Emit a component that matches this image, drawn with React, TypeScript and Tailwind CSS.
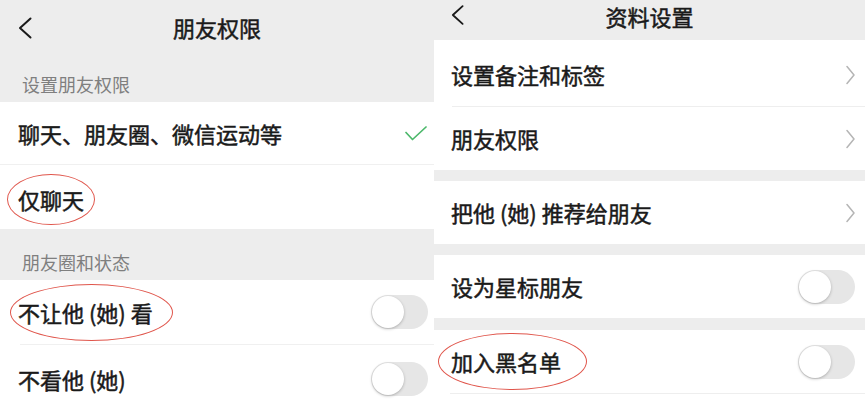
const font = { fontFamily: '"Noto Sans CJK SC", "Noto Sans", sans-serif' };

function BackIcon({ className }: { className?: string }) {
  return (
    <svg viewBox="0 0 14 22" className={className} fill="none" stroke="#1a1a1a" strokeWidth="2" strokeLinecap="round" strokeLinejoin="round">
      <path d="M12.5 1.5 2 11l10.5 9.5" />
    </svg>
  );
}

function Arrow() {
  return (
    <svg viewBox="0 0 9 20" className="w-[9px] h-[20px]" fill="none" stroke="#b5b5b5" strokeWidth="1.5" strokeLinecap="round" strokeLinejoin="round">
      <path d="M1 1.5 8 10l-7 8.5" />
    </svg>
  );
}

function Check() {
  return (
    <svg viewBox="0 0 22 15" className="w-[22px] h-[15px]" fill="none" stroke="#4cb86b" strokeWidth="1.7" strokeLinecap="round" strokeLinejoin="round">
      <path d="M1 6.5 7.5 13.5 21 1" />
    </svg>
  );
}

function Toggle() {
  return (
    <div className="w-[57px] h-[34px] rounded-full bg-[#e6e6e6] p-[1px] flex items-center">
      <div className="w-[32px] h-[32px] rounded-full bg-white shadow-[0_1px_3px_rgba(0,0,0,0.25)]" />
    </div>
  );
}

function Ring({ className }: { className: string }) {
  return <div className={"absolute rounded-[50%] border-[1.5px] border-[#e0564c] pointer-events-none " + className} />;
}

const rowText = "text-[22px] text-[#1a1a1a] [-webkit-text-stroke:0.5px_#1a1a1a]";

function LeftPanel() {
  return (
    <div className="w-[434px] h-full bg-[#ededed] flex flex-col">
      <div className="relative h-[55px] flex items-center justify-center">
        <BackIcon className="absolute left-[18px] top-[17px] w-[14px] h-[22px]" />
        <span className={rowText}>朋友权限</span>
      </div>
      <div className="h-[47px] flex items-end pl-[22px] pb-[4px] text-[18px] text-[#7f7f7f]">设置朋友权限</div>
      <div className="bg-white">
        <div className="h-[63px] flex items-center justify-between pl-[18px] pr-[7px] border-b border-[#f0f0f0]">
          <span className={rowText}>聊天、朋友圈、微信运动等</span>
          <Check />
        </div>
        <div className="h-[64px] flex items-center pl-[18px] pt-[4px]">
          <span className={"relative " + rowText}>
            仅聊天
            <Ring className="-left-[11px] -right-[11px] -top-[9px] -bottom-[9px]" />
          </span>
        </div>
      </div>
      <div className="h-[51px] flex items-end pl-[22px] pb-[4px] text-[18px] text-[#7f7f7f]">朋友圈和状态</div>
      <div className="bg-white flex-1">
        <div className="h-[64px] flex items-center justify-between pl-[18px] pr-[6px]">
          <span className={"relative " + rowText}>
            不让他 (她) 看
            <Ring className="-left-[8px] -right-[20px] -top-[12px] -bottom-[12px]" />
          </span>
          <Toggle />
        </div>
        <div className="ml-[20px] border-t border-[#f0f0f0]" />
        <div className="h-[64px] flex items-center justify-between pl-[18px] pr-[6px] pt-[4px]">
          <span className={rowText}>不看他 (她)</span>
          <Toggle />
        </div>
      </div>
    </div>
  );
}

function Row({ label, right, ring }: { label: string; right: React.ReactNode; ring?: boolean }) {
  return (
    <div className="h-[63px] flex items-center justify-between pl-[17px] pr-[10px]">
      <span className={"relative " + rowText}>
        {label}
        {ring && <Ring className="-left-[13px] -right-[26px] -top-[12px] -bottom-[12px]" />}
      </span>
      {right}
    </div>
  );
}

function RightPanel() {
  return (
    <div className="flex-1 h-full bg-[#ededed] flex flex-col">
      <div className="relative h-[40px] flex items-center justify-center pb-[8px]">
        <BackIcon className="absolute left-[17px] top-[4px] w-[13px] h-[22px]" />
        <span className={rowText}>资料设置</span>
      </div>
      <div className="bg-white">
        <div className="pt-[3px]">
          <Row label="设置备注和标签" right={<Arrow />} />
        </div>
        <div className="ml-[18px] border-t border-[#eeeeee]" />
        <Row label="朋友权限" right={<Arrow />} />
      </div>
      <div className="h-[11px]" />
      <div className="bg-white">
        <Row label="把他 (她) 推荐给朋友" right={<Arrow />} />
      </div>
      <div className="h-[11px]" />
      <div className="bg-white">
        <Row label="设为星标朋友" right={<Toggle />} />
      </div>
      <div className="h-[12px]" />
      <div className="bg-white flex-1">
        <Row label="加入黑名单" right={<Toggle />} ring />
        <div className="ml-[16px] border-t border-[#eeeeee]" />
      </div>
    </div>
  );
}

export default function App() {
  return (
    <div className="w-[865px] h-[409px] flex overflow-hidden bg-white" style={font}>
      <LeftPanel />
      <RightPanel />
    </div>
  );
}
